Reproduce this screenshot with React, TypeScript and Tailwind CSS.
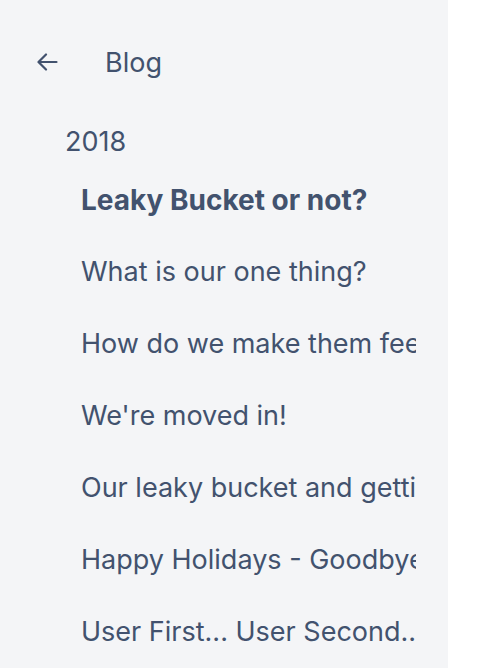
const posts = [
  { title: 'Leaky Bucket or not?', active: true },
  { title: 'What is our one thing?' },
  { title: 'How do we make them feel welcome?' },
  { title: "We're moved in!" },
  { title: 'Our leaky bucket and getting it fixed' },
  { title: 'Happy Holidays - Goodbye 2018' },
  { title: 'User First... User Second...' },
];

export default function App() {
  return (
    <div className="flex h-[668px] w-[500px] bg-white font-['Inter',sans-serif] text-[#42526e]">
      <aside className="w-[448px] shrink-0 overflow-hidden bg-[#f4f5f7] pt-[40px] pr-[32px]">
        <div className="flex h-[44px] items-center">
          <span className="flex w-[105px] justify-start pl-[37px]">
            <svg width="21" height="18" viewBox="0 0 21 18" fill="none" stroke="currentColor" strokeWidth="2.2" strokeLinecap="round" strokeLinejoin="round">
              <path d="M19.5 9H2" />
              <path d="M9 1.5 1.5 9 9 16.5" />
            </svg>
          </span>
          <span className="text-[27px] leading-none">Blog</span>
        </div>
        <div className="pl-[65px] pt-[38px] text-[27px] leading-[40px]">2018</div>
        <ul className="pl-[81px] pt-[2px]">
          {posts.map((p) => (
            <li
              key={p.title}
              className={`flex h-[72px] items-center overflow-hidden whitespace-nowrap ${p.active ? 'text-[28px] font-bold' : 'text-[27px]'}`}
            >
              {p.title}
            </li>
          ))}
        </ul>
      </aside>
      <div className="flex-1" />
    </div>
  );
}
